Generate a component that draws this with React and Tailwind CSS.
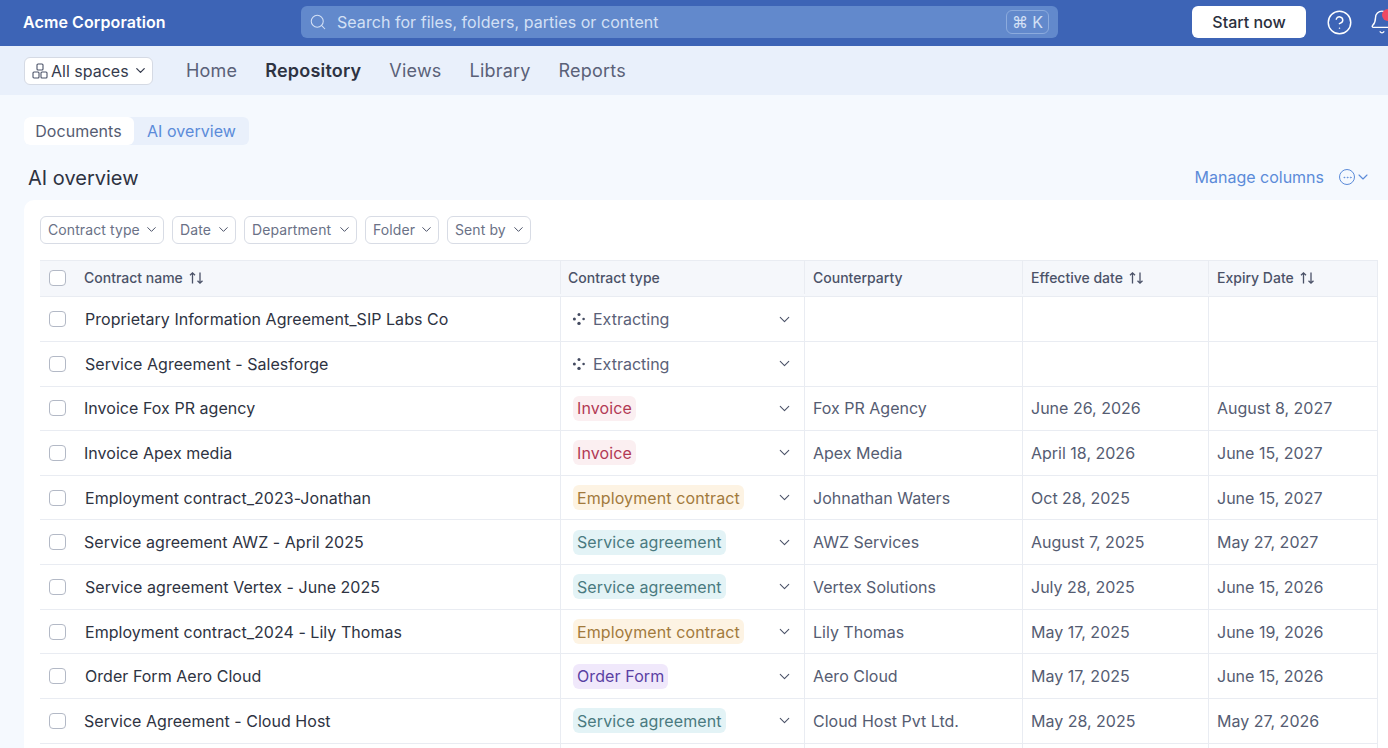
import { Search, ChevronDown, CircleHelp, Bell, Ellipsis } from 'lucide-react';

const typeStyles = {
  Invoice: 'bg-[#fbeff1] text-[#b23a55]',
  'Employment contract': 'bg-[#fdf3e3] text-[#a27a3c]',
  'Service agreement': 'bg-[#e3f3f6] text-[#4a7a80]',
  'Order Form': 'bg-[#f0e8fb] text-[#5a3fa3]',
};

const rows = [
  { name: 'Proprietary Information Agreement_SIP Labs Co', type: null, party: '', start: '', end: '', pad: 'pl-[45px]' },
  { name: 'Service Agreement - Salesforge', type: null, party: '', start: '', end: '', pad: 'pl-[45px]' },
  { name: 'Invoice Fox PR agency', type: 'Invoice', party: 'Fox PR Agency', start: 'June 26, 2026', end: 'August 8, 2027', pad: 'pl-[44px]' },
  { name: 'Invoice Apex media', type: 'Invoice', party: 'Apex Media', start: 'April 18, 2026', end: 'June 15, 2027', pad: 'pl-[44px]' },
  { name: 'Employment contract_2023-Jonathan', type: 'Employment contract', party: 'Johnathan Waters', start: 'Oct 28, 2025', end: 'June 15, 2027', pad: 'pl-[45px]' },
  { name: 'Service agreement AWZ - April 2025', type: 'Service agreement', party: 'AWZ Services', start: 'August 7, 2025', end: 'May 27, 2027', pad: 'pl-[44px]' },
  { name: 'Service agreement Vertex - June 2025', type: 'Service agreement', party: 'Vertex Solutions', start: 'July 28, 2025', end: 'June 15, 2026', pad: 'pl-[45px]' },
  { name: 'Employment contract_2024 - Lily Thomas', type: 'Employment contract', party: 'Lily Thomas', start: 'May 17, 2025', end: 'June 19, 2026', pad: 'pl-[45px]' },
  { name: 'Order Form Aero Cloud', type: 'Order Form', party: 'Aero Cloud', start: 'May 17, 2025', end: 'June 15, 2026', pad: 'pl-[45px]' },
  { name: 'Service Agreement - Cloud Host', type: 'Service agreement', party: 'Cloud Host Pvt Ltd.', start: 'May 28, 2025', end: 'May 27, 2026', pad: 'pl-[44px]' },
];

const filters = [
  { label: 'Contract type', width: 'w-[124px]' },
  { label: 'Date', width: 'w-[64px]' },
  { label: 'Department', width: 'w-[113px]' },
  { label: 'Folder', width: 'w-[74px]' },
  { label: 'Sent by', width: 'w-[84px]' },
];
const navItems = ['Home', 'Repository', 'Views', 'Library', 'Reports'];
const gridCols = 'grid grid-cols-[520px_244px_218px_186px_170px]';

const Checkbox = () => (
  <span className="absolute left-[9px] top-1/2 -translate-y-1/2 w-[17px] h-[16px] rounded-[4px] border border-[#b3b9c6] bg-white" />
);

const SortArrows = () => (
  <svg width="17" height="14" viewBox="0 0 17 14" fill="none" stroke="#4b5268" strokeWidth="1.3" className="ml-[5px]">
    <path d="M4.5 12.5V2M2 4.3 4.5 1.8 7 4.3" />
    <path d="M12 1.5V12M9.5 9.7 12 12.2 14.5 9.7" />
  </svg>
);

const SpacesIcon = () => (
  <svg width="16" height="16" viewBox="0 0 16 16" fill="none" stroke="#4b5268" strokeWidth="1.1">
    <rect x="5" y="1" width="6" height="6" rx="1" />
    <rect x="1" y="9" width="6" height="6" rx="1" />
    <rect x="9" y="9" width="6" height="6" rx="1" />
  </svg>
);

const ExtractIcon = () => (
  <svg width="14" height="14" viewBox="0 0 14 14" fill="#434a60">
    <circle cx="7" cy="2.6" r="1.5" />
    <circle cx="2.4" cy="7" r="1.5" />
    <circle cx="11.6" cy="7" r="1.3" />
    <circle cx="7" cy="11.4" r="1.7" />
  </svg>
);

const TypeCell = ({ type }) => (
  <div className="h-full flex items-center justify-between pl-[12px] pr-[11px] border-l border-[#e9ecf2]">
    {type ? (
      <span className={`px-[4px] h-[25px] flex items-center rounded-[6px] text-[16px] tracking-[0.1px] ${typeStyles[type]}`}>{type}</span>
    ) : (
      <span className="flex items-center gap-[7px] -ml-[1px] text-[16px] text-[#5a6178]">
        <ExtractIcon />
        Extracting
      </span>
    )}
    <ChevronDown size={17} strokeWidth={1.5} className="text-[#4b5268]" />
  </div>
);

const TextCell = ({ children }) => (
  <div className="h-full flex items-center pl-[8px] border-l border-[#e9ecf2] text-[16px] text-[#555c72]">{children}</div>
);

const App = () => {
  return (
    <div className="w-[1388px] h-[748px] overflow-hidden bg-[#f5f9fe] font-['Inter',sans-serif]">
      {/* Top bar */}
      <header className="h-[46px] pb-[2px] bg-[#3d64b6] flex items-center pl-[23px] w-[1420px]">
        <div className="w-[278px] text-[16px] font-semibold tracking-[0.1px] text-white">Acme Corporation</div>
        <div className="w-[757px] h-[32px] rounded-[6px] bg-[#6289cc] flex items-center pl-[8px] pr-[9px] text-[#d3e0f5]">
          <Search size={18} strokeWidth={1.4} />
          <span className="ml-[10px] text-[16px] tracking-[0.05px]">Search for files, folders, parties or content</span>
          <span className="ml-auto w-[43px] h-[24px] rounded-[6px] border border-[#8cabdd] flex items-center justify-center text-[16px] leading-none gap-[4px]">
            <span>⌘</span>
            <span>K</span>
          </span>
        </div>
        <button className="ml-[134px] w-[114px] h-[32px] rounded-[6px] bg-white text-[16px] font-medium text-[#2a2f3d]">Start now</button>
        <CircleHelp size={27} strokeWidth={1.3} className="ml-[20px] text-white" />
        <div className="relative ml-[16px]">
          <Bell size={26} strokeWidth={1.3} className="text-white" />
          <span className="absolute top-0 left-[13px] w-[12px] h-[12px] rounded-full bg-[#ee4a62]" />
        </div>
      </header>

      {/* Nav */}
      <nav className="h-[49px] bg-[#e9f0fb] flex items-center pl-[24px]">
        <button className="w-[129px] h-[28px] rounded-[6px] bg-white border border-[#d5dae4] flex items-center pl-[7px] gap-[3px] text-[16px] text-[#353b4d]">
          <SpacesIcon />
          All spaces
          <ChevronDown size={15} strokeWidth={2} className="ml-[1px]" />
        </button>
        <div className="flex items-center gap-[28px] ml-[33px] text-[18px] tracking-[0.2px] text-[#5a6178]">
          {navItems.map((item) => (
            <span key={item} className={item === 'Repository' ? 'font-semibold text-[#2e3342]' : ''}>{item}</span>
          ))}
        </div>
      </nav>

      <main className="pl-[24px]">
        {/* Tabs */}
        <div className="pt-[22px]">
          <div className="inline-flex h-[28px] rounded-[6px] bg-[#e9f0fb] text-[16px] tracking-[0.05px]">
            <span className="w-[110px] pr-[1px] flex items-center justify-center rounded-[6px] bg-white text-[#555c72]">Documents</span>
            <span className="w-[115px] flex items-center justify-center text-[#5b8bd9]">AI overview</span>
          </div>
        </div>

        {/* Title row */}
        <div className="h-[55px] pt-[11px] flex items-center justify-between pl-[4px] pr-[17px]">
          <h1 className="text-[20px] font-normal text-[#2e3342]">AI overview</h1>
          <div className="flex items-center pb-[2px] text-[#5b8bd9]">
            <span className="text-[16px]">Manage columns</span>
            <span className="ml-[15px] w-[16px] h-[16px] rounded-full border border-[#5b8bd9] flex items-center justify-center">
              <Ellipsis size={11} strokeWidth={1.6} />
            </span>
            <ChevronDown size={16} strokeWidth={1.6} />
          </div>
        </div>

        {/* Card */}
        <section className="bg-white rounded-tl-[10px] pl-[16px] pt-[16px] h-[553px]">
          <div className="flex gap-[8px] h-[28px]">
            {filters.map((filter) => (
              <button key={filter.label} className={`${filter.width} h-[28px] pl-[7px] pr-[4px] pb-[1px] rounded-[6px] border border-[#d8dce5] flex items-center justify-between text-[14px] tracking-[0.1px] text-[#6a7186]`}>
                {filter.label}
                <ChevronDown size={15} strokeWidth={1.6} className="text-[#4b5268]" />
              </button>
            ))}
          </div>

          <div className="w-[1338px] mt-[16px] border-r border-[#e9ecf2]">
            <div className={`${gridCols} h-[37.2px] pb-[2px] bg-[#f5f7fb] border-y border-[#e9ecf2] text-[14px] font-medium text-[#4b5268]`}>
              <div className="relative h-full flex items-center pl-[44px]">
                <Checkbox />
                Contract name
                <SortArrows />
              </div>
              <div className="h-full flex items-center pl-[7px] border-l border-[#e9ecf2]">Contract type</div>
              <div className="h-full flex items-center pl-[8px] border-l border-[#e9ecf2]">Counterparty</div>
              <div className="h-full flex items-center pl-[8px] border-l border-[#e9ecf2]">Effective date<SortArrows /></div>
              <div className="h-full flex items-center pl-[8px] border-l border-[#e9ecf2]">Expiry Date<SortArrows /></div>
            </div>
            {rows.map((row) => (
              <div key={row.name} className={`${gridCols} h-[44.67px] border-b border-[#e9ecf2]`}>
                <div className={`relative h-full flex items-center ${row.pad} text-[16px] tracking-[0.04px] text-[#2e3342]`}>
                  <Checkbox />
                  {row.name}
                </div>
                <TypeCell type={row.type} />
                <TextCell>{row.party}</TextCell>
                <TextCell>{row.start}</TextCell>
                <TextCell>{row.end}</TextCell>
              </div>
            ))}
            {/* next row, only its top shows above the fold */}
            <div className={`${gridCols} h-[44.67px]`}>
              <div />
              <div className="border-l border-[#e9ecf2]" />
              <div className="border-l border-[#e9ecf2]" />
              <div className="border-l border-[#e9ecf2]" />
              <div className="border-l border-[#e9ecf2]" />
            </div>
          </div>
        </section>
      </main>
    </div>
  );
};

export default App;
